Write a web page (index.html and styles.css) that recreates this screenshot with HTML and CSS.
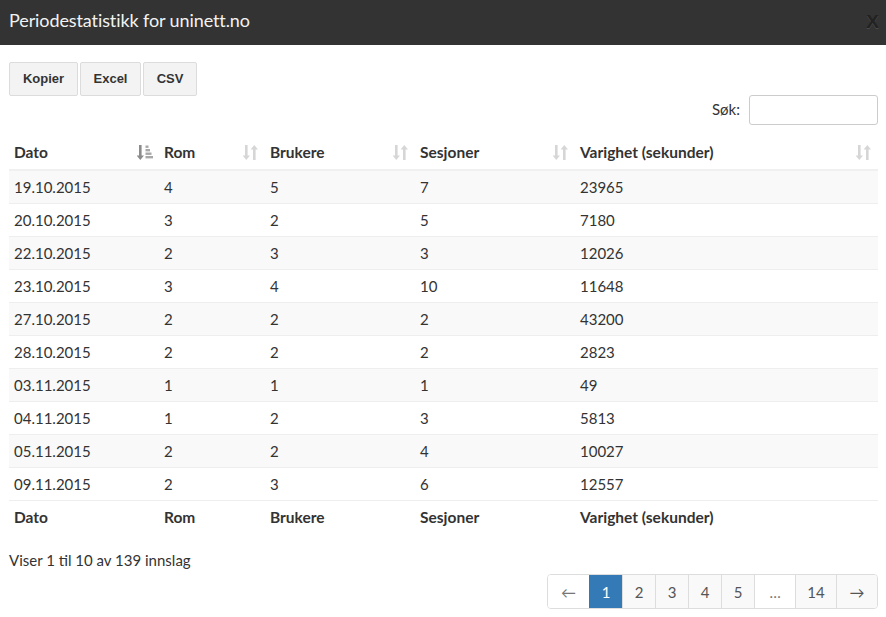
FILE: index.html
```html
<!DOCTYPE html>
<html lang="no">
<head>
<meta charset="utf-8">
<title>Periodestatistikk</title>
<link rel="stylesheet" href="styles.css">
</head>
<body>
<div class="modal">
  <header class="modal-head">
    <h1 class="modal-title">Periodestatistikk for uninett.no</h1>
    <span class="close">X</span>
  </header>
  <div class="modal-body">
    <div class="tools">
      <button class="btn">Kopier</button>
      <button class="btn">Excel</button>
      <button class="btn">CSV</button>
    </div>
    <div class="search-row">
      <label class="search-label">Søk:</label>
      <input class="search-input" type="text">
    </div>
    <table class="data">
      <thead>
        <tr>
          <th class="c1"><span>Dato</span>
            <svg class="sort" width="16" height="17" viewBox="0 0 16 17"><path d="M2 1h2.6v10.5h2.4L3.3 16 -0.4 11.5H2z" fill="#8c8c8c"/><rect x="8.5" y="1.5" width="3" height="2.4" fill="#a8a8a8"/><rect x="8.5" y="5" width="4.5" height="2.4" fill="#a8a8a8"/><rect x="8.5" y="8.5" width="6" height="2.4" fill="#a8a8a8"/><rect x="8.5" y="12" width="7.5" height="2.4" fill="#a8a8a8"/></svg></th>
          <th class="c2"><span>Rom</span>
            <svg class="sort" width="16" height="17" viewBox="0 0 16 17"><path d="M2 1h2.6v10.5h2.4L3.3 16 -0.4 11.5H2z" fill="#d6d6d6"/><path d="M10 16h2.6V5.5h2.4L11.3 1 7.6 5.5H10z" fill="#d6d6d6"/></svg></th>
          <th class="c3"><span>Brukere</span>
            <svg class="sort" width="16" height="17" viewBox="0 0 16 17"><path d="M2 1h2.6v10.5h2.4L3.3 16 -0.4 11.5H2z" fill="#d6d6d6"/><path d="M10 16h2.6V5.5h2.4L11.3 1 7.6 5.5H10z" fill="#d6d6d6"/></svg></th>
          <th class="c4"><span>Sesjoner</span>
            <svg class="sort" width="16" height="17" viewBox="0 0 16 17"><path d="M2 1h2.6v10.5h2.4L3.3 16 -0.4 11.5H2z" fill="#d6d6d6"/><path d="M10 16h2.6V5.5h2.4L11.3 1 7.6 5.5H10z" fill="#d6d6d6"/></svg></th>
          <th class="c5"><span>Varighet (sekunder)</span>
            <svg class="sort" width="16" height="17" viewBox="0 0 16 17"><path d="M2 1h2.6v10.5h2.4L3.3 16 -0.4 11.5H2z" fill="#d6d6d6"/><path d="M10 16h2.6V5.5h2.4L11.3 1 7.6 5.5H10z" fill="#d6d6d6"/></svg></th>
        </tr>
      </thead>
      <tbody>
        <tr><td>19.10.2015</td><td>4</td><td>5</td><td>7</td><td>23965</td></tr>
        <tr><td>20.10.2015</td><td>3</td><td>2</td><td>5</td><td>7180</td></tr>
        <tr><td>22.10.2015</td><td>2</td><td>3</td><td>3</td><td>12026</td></tr>
        <tr><td>23.10.2015</td><td>3</td><td>4</td><td>10</td><td>11648</td></tr>
        <tr><td>27.10.2015</td><td>2</td><td>2</td><td>2</td><td>43200</td></tr>
        <tr><td>28.10.2015</td><td>2</td><td>2</td><td>2</td><td>2823</td></tr>
        <tr><td>03.11.2015</td><td>1</td><td>1</td><td>1</td><td>49</td></tr>
        <tr><td>04.11.2015</td><td>1</td><td>2</td><td>3</td><td>5813</td></tr>
        <tr><td>05.11.2015</td><td>2</td><td>2</td><td>4</td><td>10027</td></tr>
        <tr><td>09.11.2015</td><td>2</td><td>3</td><td>6</td><td>12557</td></tr>
      </tbody>
      <tfoot>
        <tr><th>Dato</th><th>Rom</th><th>Brukere</th><th>Sesjoner</th><th>Varighet (sekunder)</th></tr>
      </tfoot>
    </table>
    <div class="info">Viser 1 til 10 av 139 innslag</div>
    <div class="pager-row">
      <ul class="pager">
        <li class="pg disabled">&larr;</li>
        <li class="pg active">1</li>
        <li class="pg">2</li>
        <li class="pg">3</li>
        <li class="pg">4</li>
        <li class="pg">5</li>
        <li class="pg gap">&hellip;</li>
        <li class="pg wide">14</li>
        <li class="pg arrow">&rarr;</li>
      </ul>
    </div>
  </div>
</div>
</body>
</html>
```
FILE: styles.css
```css
* { box-sizing: border-box; }
html, body { margin: 0; padding: 0; background: #fff; }
body { font-family: Lato, "Noto Sans", sans-serif; color: #333; font-size: 15px; }
.modal { width: 886px; height: 617px; overflow: hidden; }
.modal-head {
  height: 45px; background: #333333; display: flex; align-items: center;
  justify-content: space-between; padding: 0 7px 0 9px;
}
.modal-title { margin: 0; font-weight: 400; font-size: 18px; color: #f2f2f2; letter-spacing: -0.1px; margin-top: -6px; }
.close { color: #222; font-family: "Liberation Sans", sans-serif; font-weight: 700; font-size: 19px; margin-top: -1px; text-shadow: 0 1px 0 #4a4a4a; }
.modal-body { padding: 17px 8px 0 9px; }
.tools { display: flex; gap: 2px; }
.btn {
  height: 34px; padding: 0 12px 1px; border: 1px solid #dcdcdc; border-radius: 2px;
  background: #f3f3f3; font-family: "Liberation Sans", Arial, sans-serif; font-weight: 700;
  font-size: 13px; color: #333;
}
.btn:nth-child(1) { width: 69px; }
.btn:nth-child(2) { width: 61px; }
.btn:nth-child(3) { width: 54px; }
.search-row { display: flex; justify-content: flex-end; align-items: center; gap: 9px; margin-top: -1px; height: 30px; }
.search-label { font-size: 15px; color: #333; margin-top: -2px; }
.search-input { width: 129px; height: 30px; border: 1px solid #ccc; border-radius: 3px; margin: 0; }
.data { width: 869px; border-collapse: collapse; margin-top: 12px; table-layout: fixed; }
.data th, .data td { text-align: left; padding: 0 5px; }
.data thead th { height: 33px; font-weight: 700; font-size: 15.5px; border-bottom: 2px solid #f0f0f0; position: relative; vertical-align: middle; padding-bottom: 2px; }
.sort { position: absolute; right: 6px; top: 7px; }
.c1 { width: 150px; } .c2 { width: 106px; } .c3 { width: 150px; } .c4 { width: 160px; }
.data tbody td { height: 33px; border-top: 1px solid #eee; }
.data tbody tr:nth-child(odd) td { background: #f9f9f9; }
.data tbody tr:first-child td { border-top: none; }
.data tfoot th { height: 34px; font-weight: 700; font-size: 15.5px; border-top: 1px solid #eee; }
.info { margin-top: 15px; height: 22px; line-height: 22px; }
.pager-row { display: flex; justify-content: flex-end; margin-top: 3px; }
.pager { display: flex; list-style: none; margin: 0; padding: 0; border: 1px solid #ddd; border-radius: 4px; overflow: hidden; }
.pg { height: 33px; width: 33px; display: flex; align-items: center; justify-content: center;
  background: #f9f9f9; color: #555; border-left: 1px solid #ddd; font-size: 15px; }
.pg:first-child { border-left: none; width: 41px; }
.pg.disabled, .pg.gap { background: #fff; color: #777; }
.pg.gap { width: 41px; }
.pg.wide, .pg.arrow { width: 41px; }
.pg.active { background: #337ab7; color: #fff; border-left-color: #337ab7; }
.pg.active + .pg { border-left-color: #ddd; }
```
